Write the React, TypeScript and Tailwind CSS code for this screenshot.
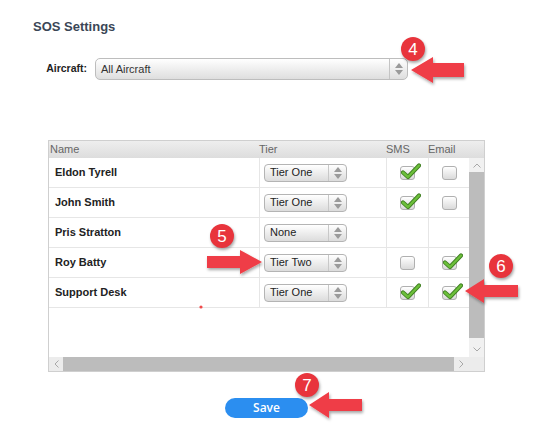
import React from 'react';

type Row = { name: string; tier: string; sms: boolean | null; email: boolean | null };

const rows: Row[] = [
  { name: 'Eldon Tyrell', tier: 'Tier One', sms: true, email: false },
  { name: 'John Smith', tier: 'Tier One', sms: true, email: false },
  { name: 'Pris Stratton', tier: 'None', sms: null, email: null },
  { name: 'Roy Batty', tier: 'Tier Two', sms: false, email: true },
  { name: 'Support Desk', tier: 'Tier One', sms: true, email: true },
];

function Spinner() {
  return (
    <svg width="8" height="12" viewBox="0 0 8 12">
      <polygon points="4,0 8,5 0,5" fill="#9a9a9a" />
      <polygon points="0,7 8,7 4,12" fill="#9a9a9a" />
    </svg>
  );
}

function TierSelect({ value }: { value: string }) {
  return (
    <div className="flex h-[18px] w-[83px] items-stretch rounded-[4px] border border-[#b4b4b4] bg-gradient-to-b from-white to-[#dcdcdc]">
      <span className="flex flex-1 items-center pl-[5px] text-[11px] text-[#222]">{value}</span>
      <span className="flex w-[18px] items-center justify-center border-l border-[#c8c8c8]">
        <Spinner />
      </span>
    </div>
  );
}

function Check({ checked }: { checked: boolean | null }) {
  if (checked === null) return null;
  return (
    <div className="relative h-[14px] w-[15px] rounded-[3px] border border-[#b0b0b0] bg-gradient-to-b from-white to-[#dadada]">
      {checked && (
        <svg className="absolute left-[0px] top-[-4px]" width="20" height="17" viewBox="0 0 20 17">
          <path d="M2 9.5 L7 14 L18 2.5" fill="none" stroke="#3f7f22" strokeWidth="4.2" strokeLinecap="round" strokeLinejoin="round" />
          <path d="M2 9.5 L7 14 L18 2.5" fill="none" stroke="#6cbf3a" strokeWidth="2.4" strokeLinecap="round" strokeLinejoin="round" />
        </svg>
      )}
    </div>
  );
}

function Badge({ n, className }: { n: string; className: string }) {
  return (
    <div
      className={`absolute flex h-[24px] w-[24px] items-center justify-center rounded-full bg-[#e8343c] text-[17px] leading-none text-white shadow-[1px_2px_3px_rgba(0,0,0,0.35)] ${className}`}
    >
      {n}
    </div>
  );
}

// left pointing arrow polygon
function leftArrow(tx: number, ty: number, hx: number, ex: number, hh: number, bh: number) {
  return `${tx},${ty} ${hx},${ty - hh} ${hx},${ty - bh} ${ex},${ty - bh} ${ex},${ty + bh} ${hx},${ty + bh} ${hx},${ty + hh}`;
}
function rightArrow(tx: number, ty: number, hx: number, ex: number, hh: number, bh: number) {
  return `${tx},${ty} ${hx},${ty - hh} ${hx},${ty - bh} ${ex},${ty - bh} ${ex},${ty + bh} ${hx},${ty + bh} ${hx},${ty + hh}`;
}

export default function App() {
  return (
    <div className="relative h-[443px] w-[549px] overflow-hidden bg-white font-['Liberation_Sans',Arial,sans-serif]">
      <h1 className="pl-[33px] pt-[19px] text-[13px] font-bold leading-[16px] text-[#3a4656]">SOS Settings</h1>

      {/* aircraft */}
      <div className="mt-[23px] flex items-center">
        <span className="w-[88px] pr-[1px] text-right text-[10.5px] font-bold text-[#222]">Aircraft:</span>
        <div className="ml-[7px] flex h-[22px] w-[313px] items-stretch rounded-[5px] border border-[#bdbdbd] bg-gradient-to-b from-white to-[#dedede]">
          <span className="flex flex-1 items-center pl-[5px] text-[11px] text-[#333]">All Aircraft</span>
          <span className="flex w-[18px] items-center justify-center border-l border-[#c4c4c4]">
            <Spinner />
          </span>
        </div>
      </div>

      {/* table */}
      <div className="ml-[48px] mt-[60px] w-[437px] border border-[#cfcfcf] text-[11px]">
        <div className="flex h-[17px] items-center bg-gradient-to-b from-[#eeeeee] to-[#dddddd] text-[#666]">
          <span className="w-[210px] pl-[1px]">Name</span>
          <span className="w-[127px]">Tier</span>
          <span className="w-[42px]">SMS</span>
          <span className="w-[41px]">Email</span>
        </div>
        <div className="flex h-[199px]">
          <div className="w-[420px]">
            {rows.map((r) => (
              <div key={r.name} className="flex h-[30px] border-b border-[#e6e6e6]">
                <div className="flex w-[210px] items-center pl-[6px] font-bold text-[#222]">{r.name}</div>
                <div className="flex w-[127px] items-center border-l border-[#e6e6e6] pl-[4px]">
                  <TierSelect value={r.tier} />
                </div>
                <div className="flex w-[42px] items-center justify-center border-l border-[#e6e6e6]">
                  <Check checked={r.sms} />
                </div>
                <div className="flex w-[41px] items-center justify-center border-l border-[#e6e6e6]">
                  <Check checked={r.email} />
                </div>
              </div>
            ))}
          </div>
          {/* vertical scrollbar */}
          <div className="flex w-[15px] flex-col bg-[#f1f1f1]">
            <div className="flex h-[14px] items-center justify-center text-[#a0a0a0]">
              <svg width="8" height="5" viewBox="0 0 8 5"><path d="M0.5 4.5 L4 1 L7.5 4.5" fill="none" stroke="#a8a8a8" strokeWidth="1" /></svg>
            </div>
            <div className="h-[166px] bg-[#bcbcbc]" />
            <div className="flex flex-1 items-end justify-center pb-[5px]">
              <svg width="8" height="5" viewBox="0 0 8 5"><path d="M0.5 0.5 L4 4 L7.5 0.5" fill="none" stroke="#a8a8a8" strokeWidth="1" /></svg>
            </div>
          </div>
        </div>
        {/* horizontal scrollbar */}
        <div className="flex h-[14px] bg-[#ececec]">
          <div className="flex w-[14px] items-center justify-center">
            <svg width="5" height="8" viewBox="0 0 5 8"><path d="M4.5 0.5 L1 4 L4.5 7.5" fill="none" stroke="#a8a8a8" strokeWidth="1" /></svg>
          </div>
          <div className="w-[391px] bg-[#bcbcbc]" />
          <div className="flex w-[15px] items-center justify-center">
            <svg width="5" height="8" viewBox="0 0 5 8"><path d="M0.5 0.5 L4 4 L0.5 7.5" fill="none" stroke="#a8a8a8" strokeWidth="1" /></svg>
          </div>
          <div className="flex-1" />
        </div>
      </div>

      {/* save */}
      <div className="ml-[48px] mt-[26px] flex w-[437px] justify-center">
        <button className="h-[20px] w-[83px] rounded-full bg-[#2b8ef0] font-['Open_Sans',sans-serif] text-[12px] font-semibold leading-none text-white">
          Save
        </button>
      </div>

      {/* annotations */}
      <svg className="pointer-events-none absolute left-0 top-0" width="549" height="443">
        <defs>
          <filter id="sh" x="-20%" y="-40%" width="140%" height="180%">
            <feDropShadow dx="1" dy="2" stdDeviation="1.5" floodColor="#000" floodOpacity="0.35" />
          </filter>
        </defs>
        <g fill="#ef3e46" filter="url(#sh)">
          <polygon points={leftArrow(411, 70, 433, 464, 13, 7)} />
          <polygon points={rightArrow(262, 262, 240, 207, 12, 6)} />
          <polygon points={leftArrow(465, 291, 484, 518, 12, 6)} />
          <polygon points={leftArrow(309, 405, 329, 362, 13, 6)} />
        </g>
        <circle cx="201" cy="307" r="1.6" fill="#f04a4a" />
      </svg>
      <Badge n="4" className="left-[401px] top-[37px]" />
      <Badge n="5" className="left-[210px] top-[224px]" />
      <Badge n="6" className="left-[489px] top-[254px]" />
      <Badge n="7" className="left-[295px] top-[373px]" />
    </div>
  );
}
